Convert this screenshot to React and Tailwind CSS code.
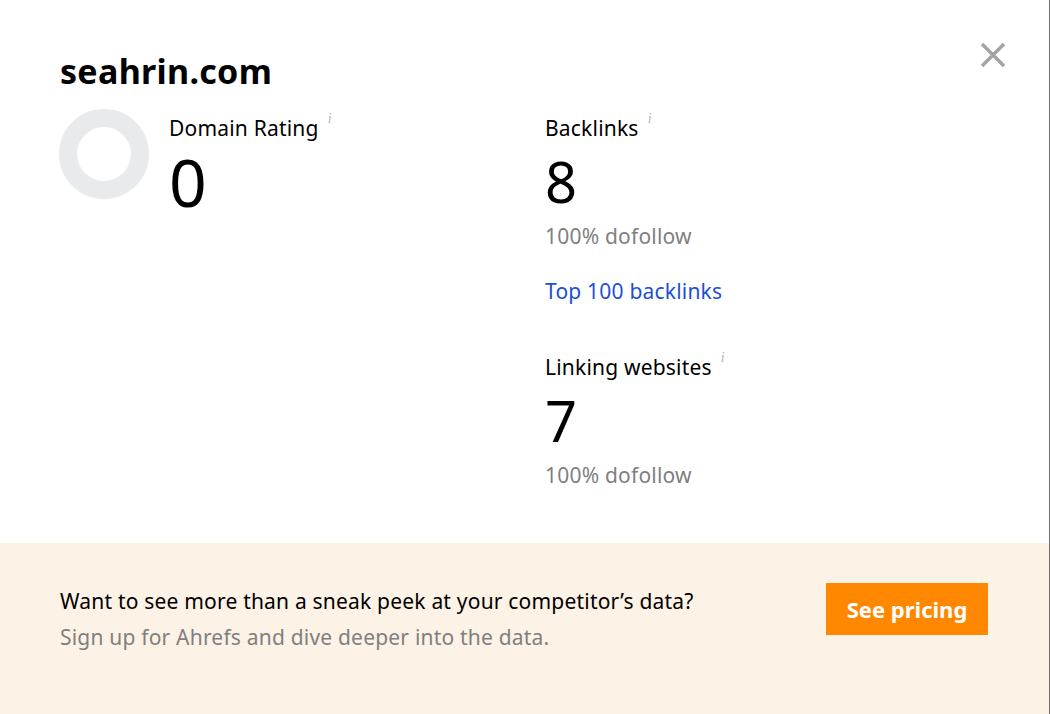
import React from 'react';

const font = { fontFamily: '"Noto Sans", Inter, sans-serif' };

const Info = () => (
    <span className="ml-[9px] -mt-[4px] self-start text-[14px] leading-[14px] italic text-[#b5b5b5] font-['Liberation_Serif',serif]">i</span>
);

const Donut = () => (
    <svg width="92" height="92" viewBox="0 0 92 92" className="shrink-0">
        <circle cx="46" cy="46" r="36" fill="none" stroke="#e9eaec" strokeWidth="18" />
    </svg>
);

const Metric = ({ label, value, note, big }) => (
    <div className="flex flex-col">
        <div className="flex items-center text-[21px] leading-[24px] tracking-[0.2px] text-black">
            {label}
            <Info />
        </div>
        <div className={big ? 'mt-[3px] text-[66px] leading-[76px] text-black' : 'mt-[8px] text-[56px] leading-[66px] text-black'}>
            {value}
        </div>
        {note && <div className="mt-[9px] text-[21px] leading-[26px] tracking-[0.2px] text-[#808080]">{note}</div>}
    </div>
);

export default function App() {
    return (
        <div style={font} className="w-[1050px] h-[714px] flex flex-col bg-white border-r border-[#6e6e6e] relative">
            <button className="absolute top-[41px] right-[42px] text-[#a3a3a3]">
                <svg width="28" height="28" viewBox="0 0 28 28">
                    <path d="M3 3 L25 25 M25 3 L3 25" stroke="currentColor" strokeWidth="3.4" />
                </svg>
            </button>

            <div className="flex-1 pl-[60px] pt-[51px]">
                <h1 className="text-[34px] leading-[40px] font-bold tracking-[0.3px] text-black">seahrin.com</h1>

                <div className="flex mt-[25px]">
                    <div className="w-[485px] flex gap-[20px]">
                        <div className="-mt-[8px] -ml-[2px]">
                            <Donut />
                        </div>
                        <div className="-ml-[1px]">
                            <Metric label="Domain Rating" value="0" big />
                        </div>
                    </div>

                    <div className="flex flex-col">
                        <Metric label="Backlinks" value="8" note="100% dofollow" />
                        <a className="mt-[29px] text-[21px] leading-[26px] tracking-[0.2px] text-[#1d4fd8]">Top 100 backlinks</a>
                        <div className="mt-[51px]">
                            <Metric label="Linking websites" value="7" note="100% dofollow" />
                        </div>
                    </div>
                </div>
            </div>

            <div className="h-[171px] bg-[#fdf2e6] flex items-start justify-between pl-[60px] pr-[61px] pt-[40px]">
                <div className="flex flex-col gap-[10px] pt-[5px]">
                    <p className="text-[21px] leading-[26px] tracking-[0.2px] text-black">Want to see more than a sneak peek at your competitor’s data?</p>
                    <p className="text-[21px] leading-[26px] tracking-[0.2px] text-[#808080]">Sign up for Ahrefs and dive deeper into the data.</p>
                </div>
                <button className="w-[162px] h-[52px] bg-[#ff8800] text-white text-[22px] font-bold">See pricing</button>
            </div>
        </div>
    );
}
